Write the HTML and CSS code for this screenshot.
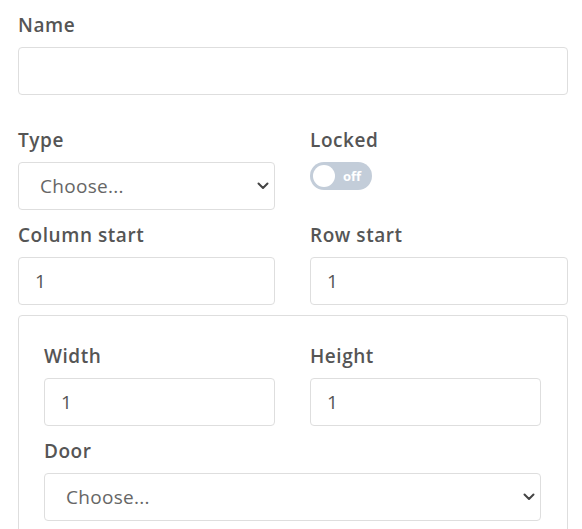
FILE: index.html
```html
<!DOCTYPE html>
<html lang="en">
<head>
<meta charset="utf-8">
<title>Form</title>
<link rel="stylesheet" href="styles.css">
</head>
<body>
<form class="form">
  <div class="group group-name">
    <label class="label" for="name">Name</label>
    <input class="input" id="name" type="text">
  </div>
  <div class="row">
    <div class="group">
      <label class="label" for="type">Type</label>
      <div class="select-wrap">
        <select class="input select" id="type"><option>Choose...</option></select>
        <svg class="chevron" width="12" height="8" viewBox="0 0 12 8"><path d="M1.5 1.5 L6 6 L10.5 1.5" fill="none" stroke="#444" stroke-width="2" stroke-linecap="round" stroke-linejoin="round"/></svg>
      </div>
    </div>
    <div class="group">
      <span class="label">Locked</span>
      <div class="toggle"><span class="knob"></span><span class="toggle-text">off</span></div>
    </div>
  </div>
  <div class="row row-last">
    <div class="group">
      <label class="label" for="col">Column start</label>
      <input class="input" id="col" type="text" value="1">
    </div>
    <div class="group">
      <label class="label" for="row">Row start</label>
      <input class="input" id="row" type="text" value="1">
    </div>
  </div>
  <div class="box">
    <div class="row row-inner">
      <div class="group">
        <label class="label" for="w">Width</label>
        <input class="input" id="w" type="text" value="1">
      </div>
      <div class="group">
        <label class="label" for="h">Height</label>
        <input class="input" id="h" type="text" value="1">
      </div>
    </div>
    <div class="group">
      <label class="label" for="door">Door</label>
      <div class="select-wrap">
        <select class="input select" id="door"><option>Choose...</option></select>
        <svg class="chevron" width="12" height="8" viewBox="0 0 12 8"><path d="M1.5 1.5 L6 6 L10.5 1.5" fill="none" stroke="#444" stroke-width="2" stroke-linecap="round" stroke-linejoin="round"/></svg>
      </div>
    </div>
  </div>
</form>
</body>
</html>
```
FILE: styles.css
```css
html, body {
  margin: 0;
  padding: 0;
  background: #ffffff;
}
body {
  font-family: "Open Sans", "Liberation Sans", sans-serif;
  color: #555555;
}
.form {
  padding: 11px 14px 0 18px;
}
.group {
  display: flex;
  flex-direction: column;
  align-items: flex-start;
  margin-bottom: 11px;
}
.group-name {
  margin-bottom: 31px;
}
.row-last .group {
  margin-bottom: 10px;
}
.label {
  display: block;
  font-size: 19px;
  line-height: 27px;
  font-weight: 580;
  letter-spacing: 0.55px;
  color: #555555;
  padding-top: 1px;
  margin-bottom: 8px;
}
.input {
  display: block;
  width: 100%;
  height: 48px;
  box-sizing: border-box;
  border: 1px solid #dedede;
  border-radius: 4px;
  background: #ffffff;
  padding: 0 16px;
  font-family: "Open Sans", "Liberation Sans", sans-serif;
  font-size: 19px;
  letter-spacing: 0.3px;
  color: #555555;
  outline: none;
  margin: 0;
}
.select-wrap {
  position: relative;
  width: 100%;
}
.select {
  appearance: none;
  -webkit-appearance: none;
  padding-left: 21px;
  color: #666666;
}
.chevron {
  position: absolute;
  right: 6px;
  top: 20px;
  pointer-events: none;
}
.row {
  display: grid;
  grid-template-columns: 257px 1fr;
  column-gap: 35px;
}
.row-inner {
  grid-template-columns: 1fr 1fr;
}
.toggle {
  position: relative;
  width: 62px;
  height: 28px;
  border-radius: 14px;
  background: #c3cdd9;
  display: flex;
  align-items: center;
  box-sizing: border-box;
  padding-left: 3px;
}
.knob {
  width: 22px;
  height: 22px;
  border-radius: 50%;
  background: #ffffff;
  flex: none;
}
.toggle-text {
  color: #ffffff;
  font-size: 13px;
  font-weight: 700;
  margin-left: 8px;
  line-height: 1;
}
.box {
  border: 1px solid #dedede;
  border-radius: 4px;
  padding: 26px 26px 0 25px;
}
```
